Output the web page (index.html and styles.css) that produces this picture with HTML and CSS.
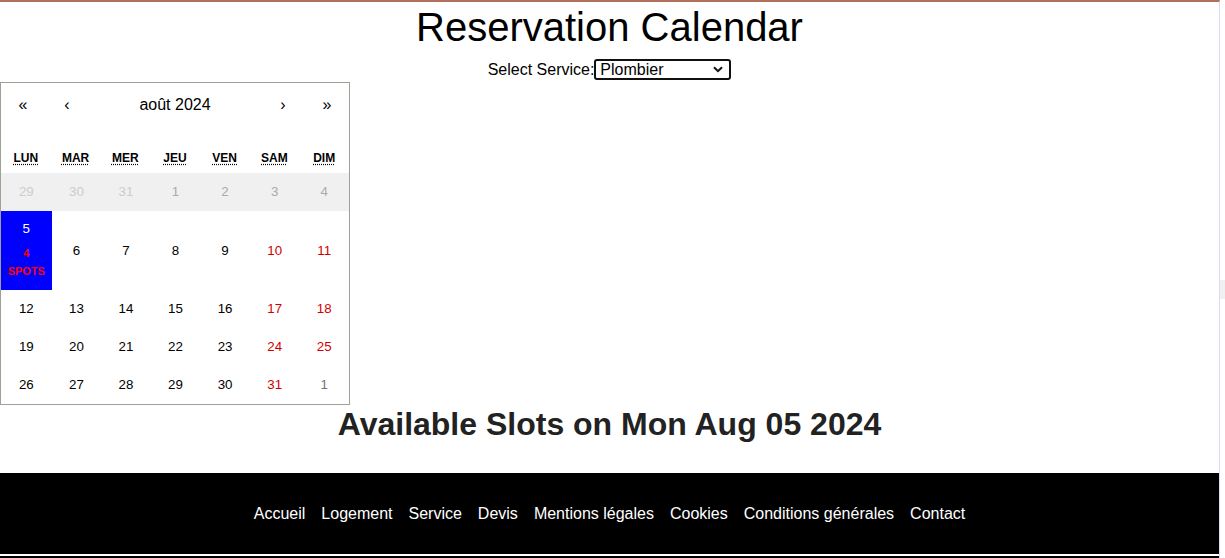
FILE: index.html
```html
<!DOCTYPE html>
<html lang="fr">
<head>
<meta charset="utf-8">
<title>Reservation Calendar</title>
<link rel="stylesheet" href="styles.css">
</head>
<body>
<div class="page">
  <h1 class="title">Reservation Calendar</h1>
  <div class="service-row">
    <label class="service-label" for="service">Select Service:</label>
    <span class="select-wrap">
      <select id="service" class="service-select">
        <option>Plombier</option>
        <option>Électricien</option>
      </select>
      <svg class="chev" width="10" height="7" viewBox="0 0 10 7"><path d="M1 1.2 L5 5.2 L9 1.2" fill="none" stroke="#111" stroke-width="2"/></svg>
    </span>
  </div>

  <div class="calendar">
    <div class="cal-nav">
      <button class="nav-btn">«</button>
      <button class="nav-btn">‹</button>
      <button class="nav-label">août 2024</button>
      <button class="nav-btn">›</button>
      <button class="nav-btn">»</button>
    </div>
    <div class="weekdays">
      <div class="wd"><abbr title="lundi">LUN</abbr></div>
      <div class="wd"><abbr title="mardi">MAR</abbr></div>
      <div class="wd"><abbr title="mercredi">MER</abbr></div>
      <div class="wd"><abbr title="jeudi">JEU</abbr></div>
      <div class="wd"><abbr title="vendredi">VEN</abbr></div>
      <div class="wd"><abbr title="samedi">SAM</abbr></div>
      <div class="wd"><abbr title="dimanche">DIM</abbr></div>
    </div>
    <div class="days">
      <button class="tile disabled neighbor">29</button>
      <button class="tile disabled neighbor">30</button>
      <button class="tile disabled neighbor">31</button>
      <button class="tile disabled">1</button>
      <button class="tile disabled">2</button>
      <button class="tile disabled">3</button>
      <button class="tile disabled">4</button>

      <button class="tile active"><span>5</span><span class="spots">4<br>SPOTS</span></button>
      <button class="tile">6</button>
      <button class="tile">7</button>
      <button class="tile">8</button>
      <button class="tile">9</button>
      <button class="tile weekend">10</button>
      <button class="tile weekend">11</button>

      <button class="tile">12</button>
      <button class="tile">13</button>
      <button class="tile">14</button>
      <button class="tile">15</button>
      <button class="tile">16</button>
      <button class="tile weekend">17</button>
      <button class="tile weekend">18</button>

      <button class="tile">19</button>
      <button class="tile">20</button>
      <button class="tile">21</button>
      <button class="tile">22</button>
      <button class="tile">23</button>
      <button class="tile weekend">24</button>
      <button class="tile weekend">25</button>

      <button class="tile">26</button>
      <button class="tile">27</button>
      <button class="tile">28</button>
      <button class="tile">29</button>
      <button class="tile">30</button>
      <button class="tile weekend">31</button>
      <button class="tile next-month">1</button>
    </div>
  </div>

  <h2 class="slots-title">Available Slots on Mon Aug 05 2024</h2>

  <footer class="footer">
    <nav class="footer-nav">
      <a href="#">Accueil</a>
      <a href="#">Logement</a>
      <a href="#">Service</a>
      <a href="#">Devis</a>
      <a href="#">Mentions légales</a>
      <a href="#">Cookies</a>
      <a href="#">Conditions générales</a>
      <a href="#">Contact</a>
    </nav>
  </footer>
  <div class="bottom-bar"></div>
</div>
<div class="scroll-thumb"></div>
</body>
</html>
```

FILE: styles.css
```css
html, body {
  margin: 0;
  padding: 0;
  height: 558px;
  overflow: hidden;
  background: #fff;
}
body {
  font-family: "Liberation Sans", Arial, sans-serif;
  color: #000;
  position: relative;
}
.page {
  width: 1219px;
  border-top: 2px solid #b2715a;
  border-right: 1px solid #d3ddf3;
  height: 556px;
}
.title {
  margin: 2px 0 0;
  font-size: 40px;
  line-height: 46px;
  font-weight: normal;
  text-align: center;
}
.service-row {
  margin-top: 9px;
  height: 21px;
  display: flex;
  justify-content: center;
  align-items: center;
  font-size: 16px;
}
.service-label {
  line-height: 18px;
}
.select-wrap {
  position: relative;
  display: block;
  width: 137px;
  height: 21px;
}
.service-select {
  appearance: none;
  -webkit-appearance: none;
  box-sizing: border-box;
  width: 137px;
  height: 21px;
  margin: 0;
  padding: 0 0 0 4px;
  border: 2px solid #101010;
  border-radius: 3px;
  background: #fff;
  font-family: "Liberation Sans", Arial, sans-serif;
  font-size: 16px;
  line-height: 17px;
  color: #000;
}
.chev {
  position: absolute;
  right: 8px;
  top: 7px;
  pointer-events: none;
}

/* calendar */
.calendar {
  margin-top: 2px;
  width: 350px;
  box-sizing: border-box;
  border: 1px solid #a0a096;
  background: #fff;
  font-family: "Liberation Sans", Arial, sans-serif;
  line-height: 18px;
}
.calendar button {
  border: 0;
  margin: 0;
  background: none;
  font-family: inherit;
  color: #000;
  cursor: pointer;
}
.cal-nav {
  display: flex;
  height: 44px;
  margin-bottom: 16px;
}
.nav-btn {
  min-width: 44px;
  width: 44px;
  font-size: 16px;
  padding: 0;
}
.nav-label {
  flex-grow: 1;
  font-size: 16px;
  padding: 0;
}
.weekdays {
  display: grid;
  grid-template-columns: repeat(7, 1fr);
  text-align: center;
  text-transform: uppercase;
  font-size: 12px;
  font-weight: bold;
}
.wd {
  padding: 6px;
  line-height: 18px;
}
.wd abbr {
  text-decoration: underline dotted;
  text-underline-offset: 2px;
}
.days {
  display: grid;
  grid-template-columns: repeat(7, 1fr);
}
.tile {
  display: flex;
  flex-direction: column;
  justify-content: center;
  align-items: center;
  padding: 11px 6.6667px;
  font-size: 13.333px;
  line-height: 16px;
  text-align: center;
}
.calendar .tile.weekend {
  color: #d10000;
}
.calendar .tile.disabled {
  background: #f0f0f0;
  color: #ababab;
}
.calendar .tile.disabled.neighbor {
  color: #cdcdcd;
}
.calendar .tile.next-month {
  color: #757575;
}
.calendar .tile.active {
  background: #0000ff;
  color: #fff;
  padding: 10px 6.6667px;
}
.spots {
  margin-top: 7px;
  color: #ff0000;
  font-weight: bold;
  font-size: 11px;
  line-height: 18px;
}

.slots-title {
  margin: 1px 0 30px;
  font-size: 32px;
  line-height: 37px;
  font-weight: bold;
  color: #222;
  text-align: center;
}

.footer {
  background: #000;
  height: 81px;
  display: flex;
  align-items: center;
  justify-content: center;
}
.footer-nav {
  display: flex;
  gap: 16px;
  font-size: 16px;
  line-height: 18px;
}
.footer-nav a {
  color: #fff;
  text-decoration: none;
}
.bottom-bar {
  border-top: 2px solid #fff;
  background: #000;
  height: 2px;
}
.scroll-thumb {
  position: absolute;
  left: 1220px;
  top: 280px;
  width: 5px;
  height: 19px;
  background: #f0f0f0;
}
```
